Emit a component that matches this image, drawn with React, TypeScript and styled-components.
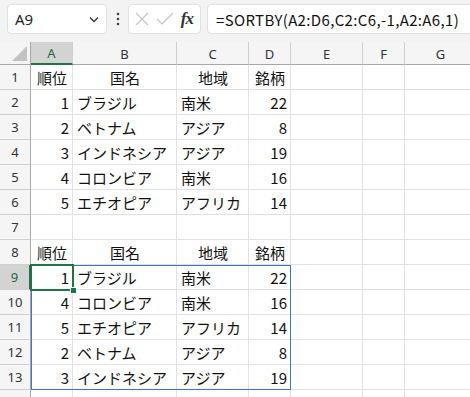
import React from "react";
import styled, { createGlobalStyle } from "styled-components";

const GlobalStyle = createGlobalStyle`
  html, body {
    margin: 0;
    padding: 0;
    background: #ffffff;
    overflow: hidden;
  }
`;

const COLS = [
  { key: "A", width: 42 },
  { key: "B", width: 104 },
  { key: "C", width: 72 },
  { key: "D", width: 42 },
  { key: "E", width: 72 },
  { key: "F", width: 42 },
  { key: "G", width: 72 },
];

type Align = "left" | "right" | "center";
type CellData = { text: string; align: Align };

const head = (t: string): CellData => ({ text: t, align: "center" });
const num = (n: number): CellData => ({ text: String(n), align: "right" });
const txt = (t: string): CellData => ({ text: t, align: "left" });

const HEADER = [head("順位"), head("国名"), head("地域"), head("銘柄")];

const ROWS: (CellData[] | null)[] = [
  HEADER,
  [num(1), txt("ブラジル"), txt("南米"), num(22)],
  [num(2), txt("ベトナム"), txt("アジア"), num(8)],
  [num(3), txt("インドネシア"), txt("アジア"), num(19)],
  [num(4), txt("コロンビア"), txt("南米"), num(16)],
  [num(5), txt("エチオピア"), txt("アフリカ"), num(14)],
  null,
  HEADER,
  [num(1), txt("ブラジル"), txt("南米"), num(22)],
  [num(4), txt("コロンビア"), txt("南米"), num(16)],
  [num(5), txt("エチオピア"), txt("アフリカ"), num(14)],
  [num(2), txt("ベトナム"), txt("アジア"), num(8)],
  [num(3), txt("インドネシア"), txt("アジア"), num(19)],
];

const Wrapper = styled.div`
  width: 470px;
  height: 397px;
  overflow: hidden;
  background: #ffffff;
`;

const Toolbar = styled.div`
  display: flex;
  align-items: flex-start;
  height: 42px;
  box-sizing: border-box;
  padding: 4px 0 0 7px;
  background: #f3f3f3;
`;

const Box = styled.div`
  height: 30px;
  box-sizing: border-box;
  background: #ffffff;
  border: 1px solid #e0e0e0;
  border-radius: 4px;
  display: flex;
  align-items: center;
`;

const NameBox = styled(Box)`
  width: 100px;
  padding: 0 6px 0 7px;
  justify-content: space-between;
  font-family: "Noto Sans", "Liberation Sans", sans-serif;
  font-size: 15px;
  color: #222;
`;

const Dots = styled.div`
  width: 21px;
  height: 30px;
  display: flex;
  align-items: center;
  justify-content: center;
`;

const FxBox = styled(Box)`
  width: 73px;
  padding: 0 5px 0 6px;
  justify-content: space-between;
`;

const FxText = styled.span`
  font-family: "Liberation Serif", "DejaVu Serif", serif;
  font-style: italic;
  font-weight: bold;
  font-size: 17px;
  color: #333;
  letter-spacing: -1px;
  margin-right: 2px;
`;

const FormulaBox = styled(Box)`
  flex: 1;
  margin-left: 6px;
  margin-right: -10px;
  padding-left: 8px;
  overflow: hidden;
  white-space: nowrap;
  font-family: "Noto Sans CJK JP", "Noto Sans", sans-serif;
  font-size: 15px;
  letter-spacing: 0.35px;
  color: #111;
`;

const Sheet = styled.div`
  position: relative;
  display: grid;
  grid-template-columns: 31px ${COLS.map((c) => `${c.width}px`).join(" ")};
  grid-template-rows: 23px;
  grid-auto-rows: 25px;
`;

const ColHead = styled.div<{ $active?: boolean }>`
  box-sizing: border-box;
  display: flex;
  align-items: center;
  justify-content: center;
  background: ${(p) => (p.$active ? "#d3d3d3" : "#f5f5f5")};
  border-right: 1px solid #d0d0d0;
  border-bottom: ${(p) => (p.$active ? "2px solid #217346" : "1px solid #a8a8a8")};
  font-family: "Noto Sans", "Liberation Sans", sans-serif;
  font-size: 13px;
  color: ${(p) => (p.$active ? "#1b6a3d" : "#333")};
  padding-top: 1px;
`;

const Corner = styled.div`
  box-sizing: border-box;
  background: #f5f5f5;
  border-right: 1px solid #a8a8a8;
  border-bottom: 1px solid #a8a8a8;
  display: flex;
  align-items: flex-end;
  justify-content: flex-end;
  padding: 0 3px 3px 0;
`;

const RowHead = styled.div<{ $active?: boolean }>`
  box-sizing: border-box;
  display: flex;
  align-items: center;
  justify-content: center;
  background: ${(p) => (p.$active ? "#d3d3d3" : "#f5f5f5")};
  border-right: ${(p) => (p.$active ? "2px solid #217346" : "1px solid #a8a8a8")};
  border-bottom: 1px solid #d0d0d0;
  font-family: "Noto Sans", "Liberation Sans", sans-serif;
  font-size: 13px;
  color: ${(p) => (p.$active ? "#1b6a3d" : "#333")};
`;

const Cell = styled.div<{ $align: Align }>`
  box-sizing: border-box;
  border-right: 1px solid #e1e1e1;
  border-bottom: 1px solid #e1e1e1;
  display: flex;
  align-items: center;
  justify-content: ${(p) =>
    p.$align === "right" ? "flex-end" : p.$align === "center" ? "center" : "flex-start"};
  padding: 0 3px 0 4px;
  font-family: "Noto Sans CJK JP", "Noto Sans", sans-serif;
  font-size: 15px;
  color: #111;
  white-space: nowrap;
  overflow: hidden;
`;

const SpillRange = styled.div`
  position: absolute;
  left: 31px;
  top: 223px;
  width: 260px;
  height: 125px;
  box-sizing: border-box;
  border: 1px solid #3a74d1;
  pointer-events: none;
`;

const Selection = styled.div`
  position: absolute;
  left: 30px;
  top: 222px;
  width: 44px;
  height: 27px;
  box-sizing: border-box;
  border: 2px solid #217346;
  pointer-events: none;
`;

const FillHandle = styled.div`
  position: absolute;
  right: -5px;
  bottom: -5px;
  width: 7px;
  height: 7px;
  box-sizing: border-box;
  background: #217346;
  border: 1px solid #ffffff;
`;

const Chevron = () => (
  <svg width="12" height="12" viewBox="0 0 12 12">
    <path d="M2 4.5 L6 8.5 L10 4.5" fill="none" stroke="#333" strokeWidth="1.3" />
  </svg>
);

const VDots = () => (
  <svg width="4" height="14" viewBox="0 0 4 14">
    <circle cx="2" cy="2" r="1.3" fill="#444" />
    <circle cx="2" cy="7" r="1.3" fill="#444" />
    <circle cx="2" cy="12" r="1.3" fill="#444" />
  </svg>
);

const Cross = () => (
  <svg width="14" height="14" viewBox="0 0 14 14">
    <path d="M1 1 L13 13 M13 1 L1 13" stroke="#c4c4c4" strokeWidth="1.2" fill="none" />
  </svg>
);

const Check = () => (
  <svg width="18" height="14" viewBox="0 0 18 14">
    <path d="M1 7 L6 12 L17 1" stroke="#c4c4c4" strokeWidth="1.2" fill="none" />
  </svg>
);

const CornerTriangle = () => (
  <svg width="15" height="15" viewBox="0 0 15 15">
    <path d="M15 0 L15 15 L0 15 Z" fill="#c2c2c2" />
  </svg>
);

const ACTIVE_COL = "A";
const ACTIVE_ROW = 9;

const App: React.FC = () => {
  return (
    <Wrapper>
      <GlobalStyle />
      <Toolbar>
        <NameBox>
          <span>A9</span>
          <Chevron />
        </NameBox>
        <Dots>
          <VDots />
        </Dots>
        <FxBox>
          <Cross />
          <Check />
          <FxText>fx</FxText>
        </FxBox>
        <FormulaBox>=SORTBY(A2:D6,C2:C6,-1,A2:A6,1)</FormulaBox>
      </Toolbar>
      <Sheet>
        <Corner>
          <CornerTriangle />
        </Corner>
        {COLS.map((c) => (
          <ColHead key={c.key} $active={c.key === ACTIVE_COL}>
            {c.key}
          </ColHead>
        ))}
        {ROWS.map((row, i) => {
          const rowNo = i + 1;
          return (
            <React.Fragment key={`row_${rowNo}`}>
              <RowHead $active={rowNo === ACTIVE_ROW}>{rowNo}</RowHead>
              {COLS.map((c, ci) => {
                const cell = row?.[ci];
                return (
                  <Cell key={`${c.key}${rowNo}`} $align={cell?.align ?? "left"}>
                    {cell?.text}
                  </Cell>
                );
              })}
            </React.Fragment>
          );
        })}
        {/* row 14 only peeks in at the bottom edge, its label is out of view */}
        <RowHead />
        {COLS.map((c) => (
          <Cell key={`${c.key}14`} $align="left" />
        ))}
        <SpillRange />
        <Selection>
          <FillHandle />
        </Selection>
      </Sheet>
    </Wrapper>
  );
};

export default App;
